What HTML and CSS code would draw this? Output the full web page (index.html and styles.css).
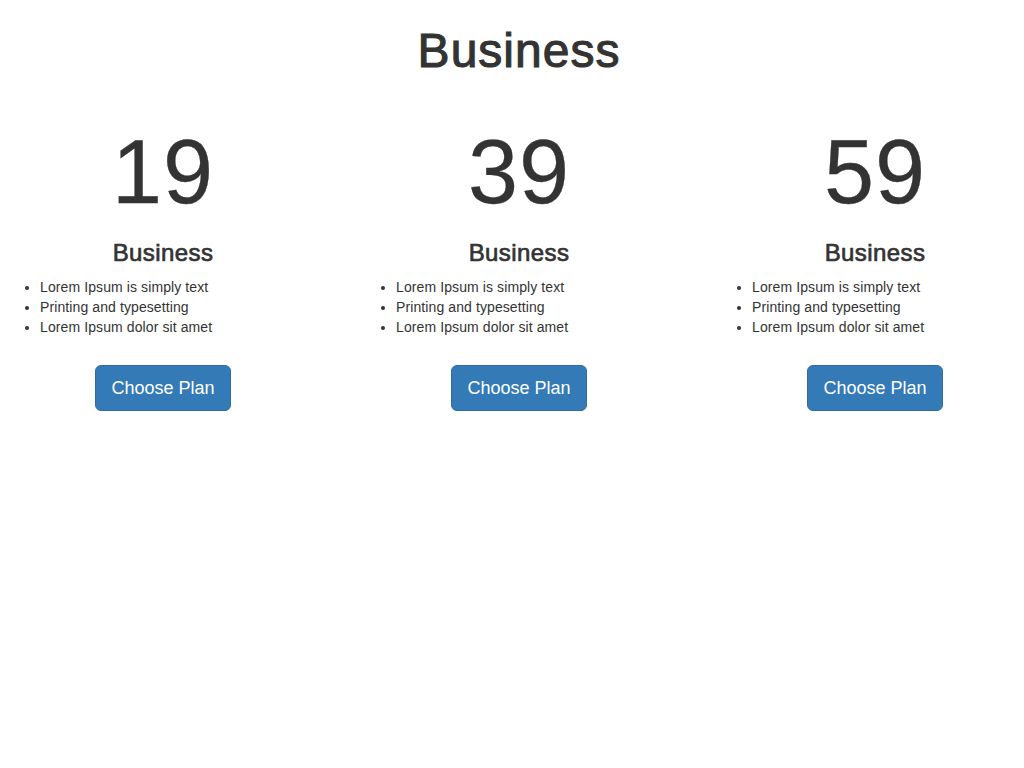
FILE: index.html
```html
<!DOCTYPE html>
<html lang="en">
<head>
<meta charset="utf-8">
<title>Business Plans</title>
<link rel="stylesheet" href="styles.css">
</head>
<body>
<div class="page">
  <h1 class="title">Business</h1>
  <div class="plans">
    <div class="plan">
      <div class="price">19</div>
      <h3 class="plan-name">Business</h3>
      <ul class="features">
        <li>Lorem Ipsum is simply text</li>
        <li>Printing and typesetting</li>
        <li>Lorem Ipsum dolor sit amet</li>
      </ul>
      <div class="action"><button class="btn">Choose Plan</button></div>
    </div>
    <div class="plan">
      <div class="price">39</div>
      <h3 class="plan-name">Business</h3>
      <ul class="features">
        <li>Lorem Ipsum is simply text</li>
        <li>Printing and typesetting</li>
        <li>Lorem Ipsum dolor sit amet</li>
      </ul>
      <div class="action"><button class="btn">Choose Plan</button></div>
    </div>
    <div class="plan">
      <div class="price">59</div>
      <h3 class="plan-name">Business</h3>
      <ul class="features">
        <li>Lorem Ipsum is simply text</li>
        <li>Printing and typesetting</li>
        <li>Lorem Ipsum dolor sit amet</li>
      </ul>
      <div class="action"><button class="btn">Choose Plan</button></div>
    </div>
  </div>
</div>
</body>
</html>
```

FILE: styles.css
```css
html, body {
  margin: 0;
  padding: 0;
  overflow: hidden;
  background: #fff;
}
body {
  font-family: "Liberation Sans", Arial, Helvetica, sans-serif;
  font-size: 14px;
  line-height: 20px;
  color: #333;
}
.page {
  width: 1038px;
}
.title {
  margin: 25px 0 0;
  font-size: 48px;
  line-height: 52.8px;
  font-weight: 400;
  -webkit-text-stroke: 1.1px #333;
  text-align: center;
  letter-spacing: 1px;
}
.plans {
  display: grid;
  grid-template-columns: 326px 326px 326px;
  column-gap: 30px;
  margin-top: 47px;
}
.plan {
  display: flex;
  flex-direction: column;
}
.price {
  font-size: 90px;
  line-height: 95.6px;
  text-align: center;
  letter-spacing: 1px;
  -webkit-text-stroke: 0.3px #333;
}
.plan-name {
  margin: 20px 0 0;
  font-size: 24px;
  line-height: 26.4px;
  font-weight: 400;
  -webkit-text-stroke: 0.7px #333;
  text-align: center;
  letter-spacing: 0.4px;
}
.features {
  margin: 10px 0 0;
  padding-left: 40px;
  letter-spacing: 0.1px;
}
.action {
  margin-top: 28px;
  text-align: center;
}
.btn {
  font-family: inherit;
  font-size: 18px;
  line-height: 24px;
  padding: 10px 15px;
  color: #fff;
  background: #337ab7;
  border: 1px solid #2e6da4;
  border-radius: 6px;
  cursor: pointer;
}
```
